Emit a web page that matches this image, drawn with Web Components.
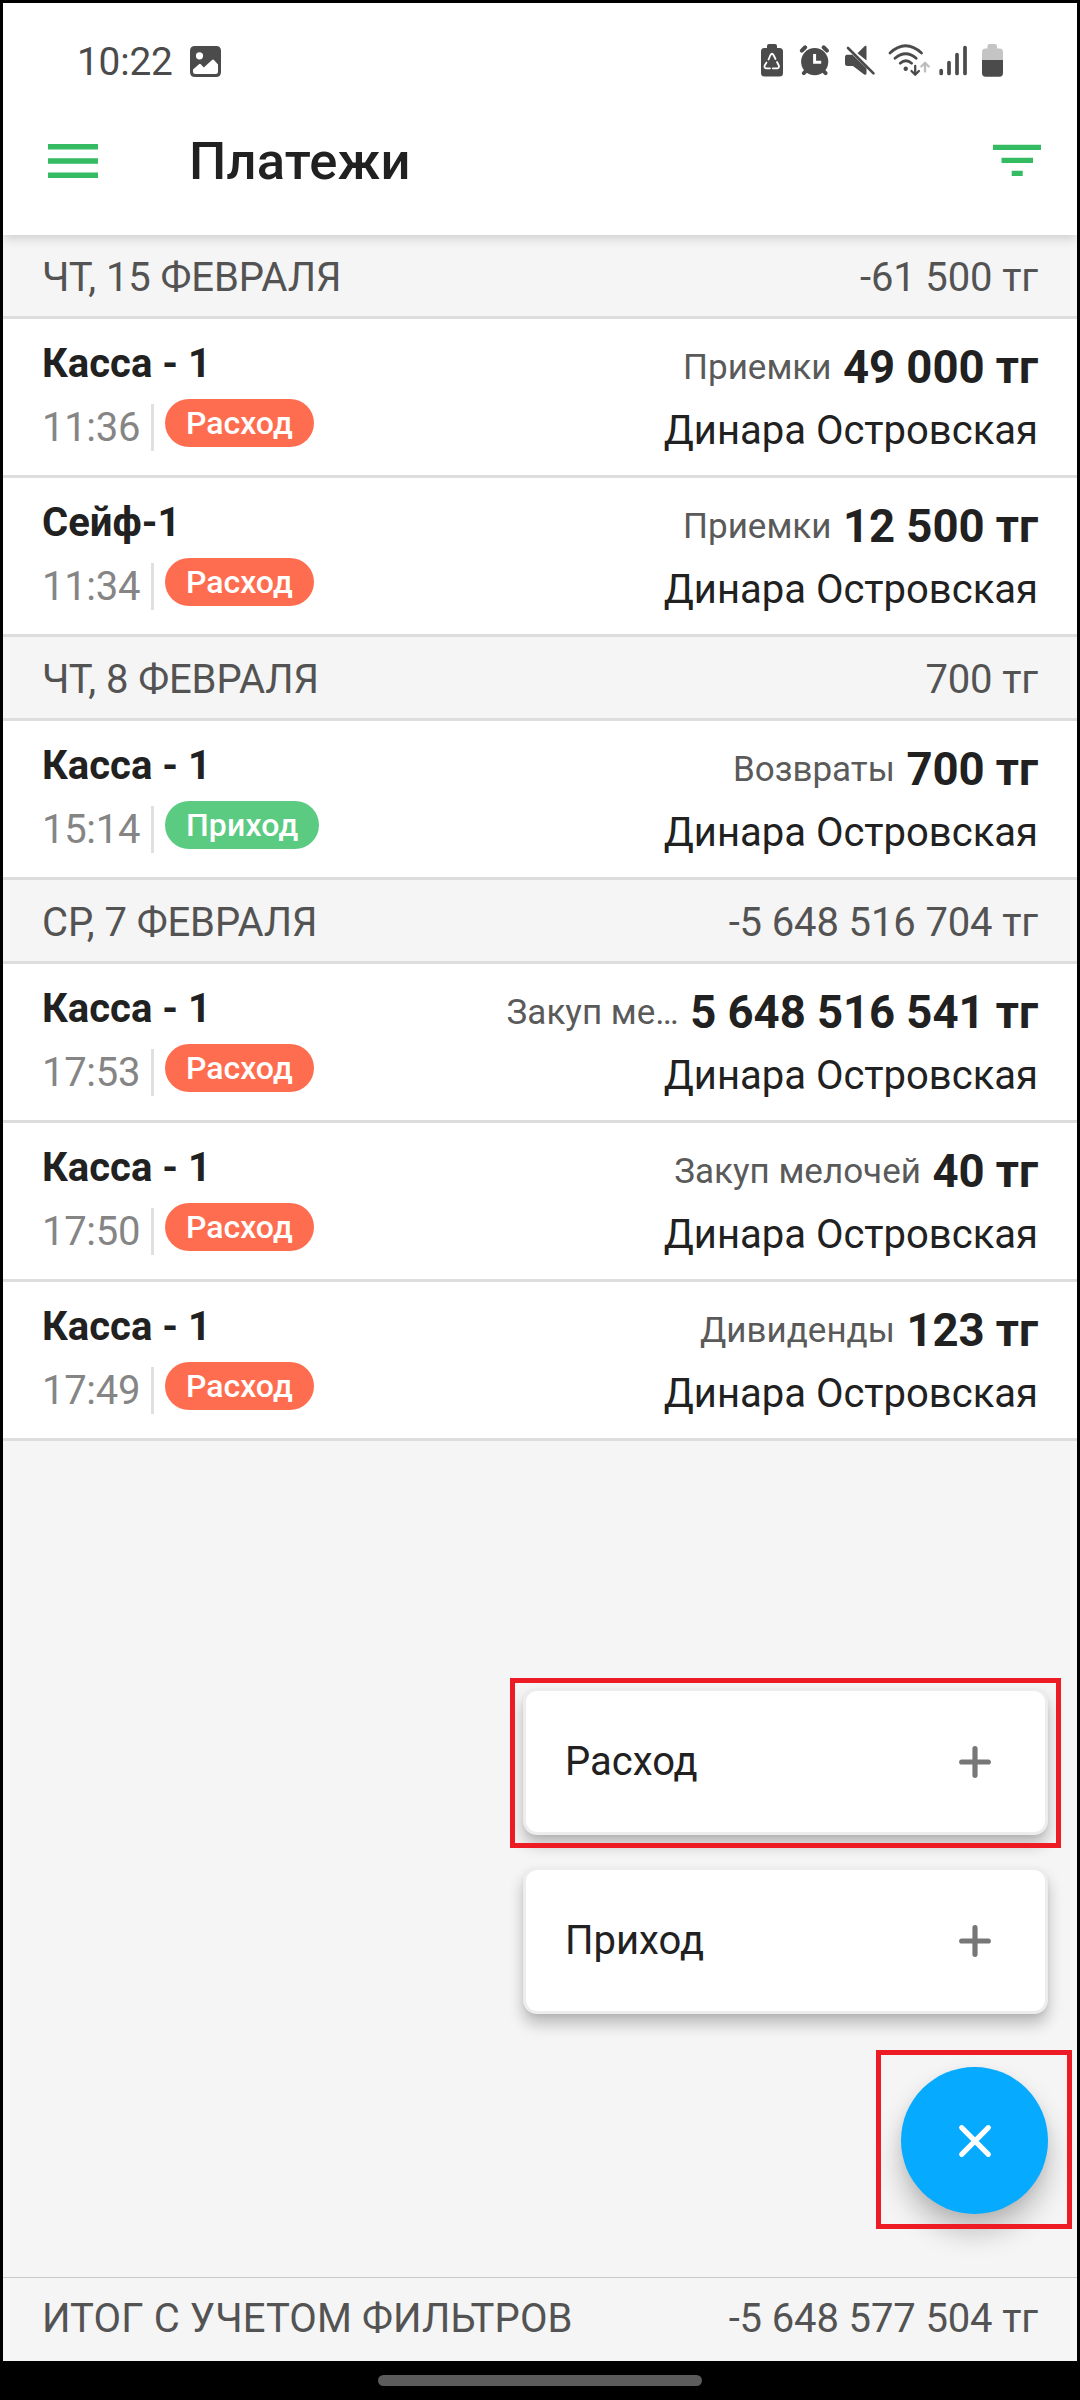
<!DOCTYPE html>
<html lang="ru">
<head>
<meta charset="utf-8">
<title>Платежи</title>
<style>
html,body{margin:0;padding:0;background:#000}
body{font-family:Roboto,"Noto Sans",sans-serif;color:#212121}
</style>
</head>
<body>
<payments-screen></payments-screen>
<script>
const define = (name, html, setup) => customElements.define(name, class extends HTMLElement {
  connectedCallback() {
    if (this.shadowRoot) return;
    const root = this.attachShadow({mode: 'open'});
    root.innerHTML = typeof html === 'function' ? html(this) : html;
    if (setup) setup(this, root);
  }
});

define('status-bar', `
<style>
:host{display:flex;height:116px;padding:0 73px 0 74px;box-sizing:border-box;justify-content:space-between;align-items:flex-start;color:#4b4b4b}
.left{display:flex;padding-top:35px;gap:14px}
.time{font-size:38.800px;line-height:47px;width:99px;white-space:nowrap;letter-spacing:-.2px}
.left svg{margin-top:8px}
svg{display:block}
</style>
<div class="left"><span class="time">10:22</span>
<svg width="32" height="32" viewBox="0 0 32 32"><path fill="#4b4b4b" fill-rule="evenodd" d="M5 0H26Q31 0 31 5V26Q31 31 26 31H5Q0 31 0 26V5Q0 0 5 0ZM9.5 6.2A3.6 3.6 0 1 0 9.5 13.4A3.6 3.6 0 1 0 9.5 6.2ZM3 23.5V25.5Q3 28 5.500 28H25.5Q28 28 28 25.5V18.500L24 14Q23 13 22 14L13.800 21.500L10.800 18.200Q10 17.400 9 18.200Z"/></svg></div>
<svg width="264" height="90" viewBox="740 20 264 90" fill="#4b4b4b" style="margin-top:17px">
  <path d="M769 44h6q2 0 2 2v2h2.500q3.500 0 3.500 3.500v21.500q0 3.500-3.500 3.500h-15q-3.500 0-3.500-3.500v-21.500q0-3.500 3.500-3.500H767v-2q0-2 2-2z"/>
  <g fill="none" stroke="#fff" stroke-width="1.800" stroke-linecap="round" stroke-linejoin="round"><path d="M768.500 59.500l2-4.500q1.500-2.500 3 0l2 4M766.500 62.500l-1.800 3q-.9 2.300 1.500 2.800h3.800M777 62l1.800 3.500q.8 2.300-1.500 2.800h-4.500"/></g>
  <circle cx="814.700" cy="61.700" r="13.600"/>
  <g stroke="#4b4b4b" stroke-width="4" stroke-linecap="round"><path d="M801.800 50.600l3.400-3.300M827 50.600l-3.400-3.300M803.800 73.200l3-3M825.600 73.200l-3-3"/></g>
  <path d="M814.600 54v8.200h6.600" fill="none" stroke="#fff" stroke-width="3"/>
  <path d="M847 54.700h5.500l14 13.500v5.300q-.5 2.200-2.700.8L853 66h-5.500q-2.500 0-2.500-2.500v-6q0-2.800 2-2.800zM857.500 53.300l7.300-7.200q1.700-1 1.700.7v13.800z"/>
  <path d="M848 48l25.500 25.300" stroke="#4b4b4b" stroke-width="2.600" stroke-linecap="round"/>
  <g fill="none" stroke="#4b4b4b" stroke-width="2.800" stroke-linecap="round"><path d="M890 53q15.500-14.400 31.500 0M895 58.300q10.700-9.200 21.200 0M900.200 63.200q5.700-4.800 11.400 0"/></g>
  <circle cx="905.700" cy="68.800" r="2.200"/>
  <g fill="none" stroke-width="2.300" stroke-linecap="round" stroke-linejoin="round"><path stroke="#4b4b4b" d="M915.200 66v8.500M911.500 71l3.700 3.700 3.700-3.700"/><path stroke="#bdbdbd" d="M925 71.500v-8.500M921.300 66.500l3.700-3.700 3.700 3.700"/></g>
  <g stroke="#4b4b4b" stroke-width="3.700" stroke-linecap="round"><path d="M941.200 70.500v3M949 62.500v11M957 54.500v19M965 47.500v26"/></g>
  <path fill="#c4c4c4" d="M989.500 44h5.500q2 0 2 2v2.500h2.500q3.500 0 3.500 3.500v8.500h-21V52q0-3.500 3.500-3.500h2V46q0-2 2-2z"/>
  <path d="M982 60h21v13q0 3.700-3.500 3.700h-14q-3.500 0-3.500-3.700z"/>
</svg>`);

define('app-bar', `
<style>
:host{display:flex;height:116px;align-items:flex-start;padding:0 36.500px 0 45px;box-sizing:border-box}
svg{display:block}
h1{margin:12px 0 0 91px;font-size:52.500px;line-height:60px;font-weight:500;flex:1;color:#212121;letter-spacing:.2px}
.menu{margin-top:25px}.filter{margin-top:25px}
</style>
<svg class="menu" width="50" height="36" viewBox="0 0 50 36" fill="#35bb62"><path d="M0 0h50v5.500H0zM0 14.200h50v5.500H0zM0 28.400h50v5.500H0z"/></svg>
<h1><slot></slot></h1>
<svg class="filter" width="48" height="36" viewBox="0 0 48 36" fill="#35bb62"><path d="M0 .7h48v5.400H0zM8.500 13.700h31.500v5.400H8.500zM18.700 26.700h11v5.400h-11z"/></svg>`);

define('day-header', `
<style>
:host{display:flex;height:84px;box-sizing:border-box;border-bottom:3px solid #ddd;background:#f5f5f5;color:#535353;font-size:40px;line-height:77px;padding:4px 39px 0 39px;justify-content:space-between;white-space:nowrap}
span{letter-spacing:-.08px}
::slotted([slot=sum]){letter-spacing:-.13px}
:host([total]) span{letter-spacing:.13px}
:host([total]){height:84px;border-bottom:0;border-top:1px solid #c8c8c8;padding-top:3px;line-height:75px}
</style><span><slot></slot></span><slot name="sum"></slot>`);

define('type-badge', `
<style>
:host{display:block;height:48px;border-radius:24px;padding:0 21px;background:#ff6d50;color:#fff;font-size:32px;line-height:48px;font-weight:500}
:host([kind=in]){background:#5acb81;letter-spacing:.15px}
</style><slot></slot>`);

define('payment-row', el => {
  const a = n => el.getAttribute(n);
  return `
<style>
:host{display:flex;justify-content:space-between;height:159px;box-sizing:border-box;border-bottom:3px solid #ddd;background:#fff;padding:0 39px 0 39px;white-space:nowrap;font-size:40px;line-height:47px}
.l{padding-top:21px}.r{padding-top:22px;text-align:right}
.acc{font-weight:700}
.meta{display:flex;align-items:flex-start;margin-top:12px}
.time{margin-top:5px;box-sizing:border-box;border-right:3px solid #e0e0e0;height:47px;color:#858585;width:112px;margin-right:11px;letter-spacing:-.3px}
.sum{display:flex;justify-content:flex-end;align-items:center;gap:11.500px;line-height:53px}
.cat{font-size:35px;color:#5a5a5a}
.amt{font-size:45.500px;font-weight:700;letter-spacing:-.05px}
.own{margin-top:13px}
</style>
<div class="l"><div class="acc">${a('account')}</div>
<div class="meta"><span class="time">${a('time')}</span><type-badge kind="${a('kind')}">${a('kind') === 'in' ? 'Приход' : 'Расход'}</type-badge></div></div>
<div class="r"><div class="sum"><span class="cat">${a('category')}</span><span class="amt">${a('amount')}</span></div>
<div class="own">Динара Островская</div></div>`;
});

define('action-card', `
<style>
:host{display:flex;width:525px;height:147px;box-sizing:border-box;border:3px solid #ededed;border-radius:14px;background:#fff;background-clip:padding-box;box-shadow:0 10px 15px rgba(0,0,0,.24),0 2px 4px rgba(0,0,0,.06);align-items:center;justify-content:space-between;padding:0 53.500px 0 39px;font-size:40px;line-height:47px}
svg{display:block}
</style><slot></slot>
<svg width="34" height="34" viewBox="-17 -17 34 34"><path d="M-13.300 0H13.300M0-13.300V13.300" stroke="#777" stroke-width="5.200" stroke-linecap="round"/></svg>`);

define('close-fab', `
<style>
:host{display:flex;width:147px;height:147px;border-radius:50%;background:#06aaff;align-items:center;justify-content:center;box-shadow:0 18px 28px rgba(0,0,0,.23),0 4px 12px rgba(0,0,0,.06)}
svg{display:block}
</style>
<svg width="36" height="36" viewBox="-18 -18 36 36"><path d="M-13.300-13.300L13.300 13.300M-13.300 13.300L13.300-13.300" stroke="#fff" stroke-width="5.200" stroke-linecap="round"/></svg>`);

define('mark-box', `<style>:host{display:block;position:absolute;box-sizing:border-box;border:5px solid #ed1c24;pointer-events:none}</style>`);

define('payments-screen', `
<style>
:host{display:flex;flex-direction:column;width:1080px;height:2400px;box-sizing:border-box;padding:3px 3px 0;background:#000;position:relative;overflow:hidden}
.top{background:#fff;height:232px;box-shadow:0 3px 10px rgba(0,0,0,.17);position:relative;z-index:1;clip-path:inset(0 0 -20px 0)}
.list{flex:1;background:#f5f5f5}
.nav{height:39px;display:flex;justify-content:center;align-items:flex-start;padding-top:14px;box-sizing:border-box}
.pill{width:324px;height:11px;border-radius:5.500px;background:#5c5c5c}
.actions{position:absolute;right:32px;top:1688px;display:flex;flex-direction:column;gap:32px;align-items:flex-end}
close-fab{margin-top:21px}
.m1{left:510px;top:1678px;width:551px;height:170px}
.m2{left:876px;top:2050px;width:196px;height:179px}
</style>
<div class="top"><status-bar></status-bar><app-bar>Платежи</app-bar></div>
<div class="list">
<day-header>ЧТ, 15 ФЕВРАЛЯ<span slot="sum">-61 500 тг</span></day-header>
<payment-row account="Касса - 1" time="11:36" kind="out" category="Приемки" amount="49 000 тг"></payment-row>
<payment-row account="Сейф-1" time="11:34" kind="out" category="Приемки" amount="12 500 тг"></payment-row>
<day-header>ЧТ, 8 ФЕВРАЛЯ<span slot="sum">700 тг</span></day-header>
<payment-row account="Касса - 1" time="15:14" kind="in" category="Возвраты" amount="700 тг"></payment-row>
<day-header>СР, 7 ФЕВРАЛЯ<span slot="sum">-5 648 516 704 тг</span></day-header>
<payment-row account="Касса - 1" time="17:53" kind="out" category="Закуп ме…" amount="5 648 516 541 тг"></payment-row>
<payment-row account="Касса - 1" time="17:50" kind="out" category="Закуп мелочей" amount="40 тг"></payment-row>
<payment-row account="Касса - 1" time="17:49" kind="out" category="Дивиденды" amount="123 тг"></payment-row>
</div>
<day-header total>ИТОГ С УЧЕТОМ ФИЛЬТРОВ<span slot="sum">-5 648 577 504 тг</span></day-header>
<div class="nav"><div class="pill"></div></div>
<div class="actions"><action-card>Расход</action-card><action-card>Приход</action-card><close-fab></close-fab></div>
<mark-box class="m1"></mark-box><mark-box class="m2"></mark-box>`);
</script>
</body>
</html>
